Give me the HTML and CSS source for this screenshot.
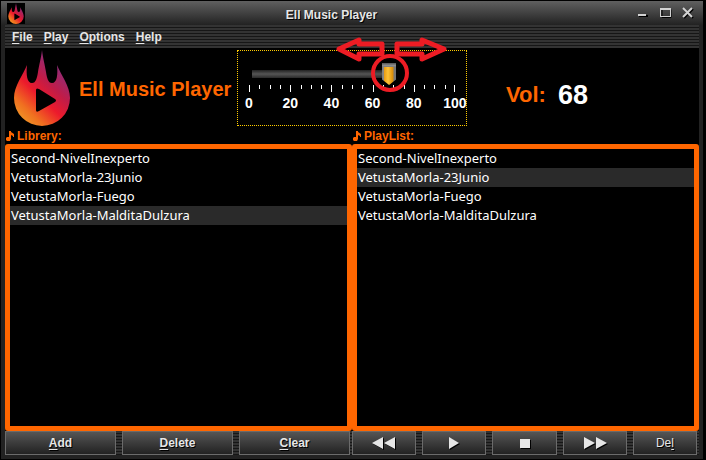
FILE: index.html
```html
<!DOCTYPE html>
<html lang="en">
<head>
<meta charset="utf-8">
<title>Ell Music Player</title>
<link rel="stylesheet" href="styles.css">
</head>
<body>
<svg class="defs" width="0" height="0" aria-hidden="true">
  <defs>
    <linearGradient id="fire" x1="0.15" y1="1" x2="0.75" y2="0.15">
      <stop offset="0" stop-color="#f0a028"/>
      <stop offset="0.22" stop-color="#f07020"/>
      <stop offset="0.48" stop-color="#ec1a2c"/>
      <stop offset="0.7" stop-color="#c01c48"/>
      <stop offset="1" stop-color="#8c2d7c"/>
    </linearGradient>
    <symbol id="flame" viewBox="0 0 56 76">
      <path fill="url(#fire)" fill-rule="evenodd" d="M28 0 C29 9 31 15 32 22 C33 28 34 33 38 33 C43 33 44 25 43 15 C47 25 56 36 56 48 A28 28 0 0 1 0 48 C0 36 9 25 13 15 C12 25 13 33 18 33 C22 33 23 28 24 22 C25 15 27 9 28 0 Z M22 40 V60 Q22 63 25 61 L41 52 Q43 50.500 41 49 L25 39 Q22 37.500 22 40 Z"/>
    </symbol>
    <symbol id="note" viewBox="0 0 8 10">
      <path d="M3 0h2v1l3 2v3h-1v-1l-2-1v4l-1 2h-3l-1-1v-2l1-1h2z"/>
    </symbol>
  </defs>
</svg>
<div class="window">
  <header class="titlebar">
    <svg class="app-icon" viewBox="0 0 18 21" aria-hidden="true"><rect width="18" height="21"/><use href="#flame" x="1" y="0" width="16" height="21"/></svg>
    <h1 class="title">Ell Music Player</h1>
    <div class="window-controls">
      <button type="button" aria-label="Minimize"><svg width="12" height="12"><path d="M1 8h9v2h-9z" fill="#000"/><path d="M0 7h8v2h-8z" fill="#d2d2d2"/></svg></button>
      <button type="button" aria-label="Maximize"><svg width="12" height="12"><path d="M2 2.500h9v8h-9z" fill="none" stroke="#000" stroke-width="1"/><path d="M0 1h11v2h-11zM0 1h1v9h-1zM10 1h1v9h-1zM0 9h11v1h-11z" fill="#d2d2d2"/></svg></button>
      <button type="button" aria-label="Close"><svg width="12" height="12"><path d="M2 2l9 9M11 2l-9 9" stroke="#000" stroke-width="2"/><path d="M1 1l9 9M10 1l-9 9" stroke="#d2d2d2" stroke-width="2"/></svg></button>
    </div>
  </header>
  <div class="frame">
    <nav class="menubar">
      <button type="button"><u>F</u>ile</button>
      <button type="button"><u>P</u>lay</button>
      <button type="button"><u>O</u>ptions</button>
      <button type="button"><u>H</u>elp</button>
    </nav>
    <section class="banner">
      <svg class="logo" aria-hidden="true"><use href="#flame"/></svg>
      <h2 class="brand">Ell Music Player</h2>
      <div class="volume">
        <input type="range" min="0" max="100" value="68" aria-label="Volume">
        <svg class="ticks" viewBox="0 0 206 8" aria-hidden="true">
          <path stroke="#fff" d="M.5 0v7M41.500 0v7M82.500 0v7M124.500 0v7M165.500 0v7M205.500 0v7M10.500 0v4M21.500 0v4M31.500 0v4M52.500 0v4M62.500 0v4M72.500 0v4M93.500 0v4M103.500 0v4M113.500 0v4M134.500 0v4M144.500 0v4M155.500 0v4M175.500 0v4M185.500 0v4M196.500 0v4"/>
        </svg>
        <div class="scale"><span>0</span><span>20</span><span>40</span><span>60</span><span>80</span><span>100</span></div>
        <svg class="drag-hint" viewBox="0 0 112 56" aria-hidden="true">
          <g fill="none" stroke="#ed1c24" stroke-width="5" stroke-linejoin="round">
            <path d="M3 13 L23 4 V8 H46 V18 H23 V23 Z"/>
            <path d="M108 13 L86 4 V8 H61 V18 H86 V23 Z"/>
            <circle cx="54" cy="37" r="17" stroke-width="4"/>
          </g>
        </svg>
      </div>
      <p class="level"><span>Vol:</span><output>68</output></p>
    </section>
    <main class="lists">
      <section class="panel">
        <h3><svg class="note" aria-hidden="true"><use href="#note"/></svg>Librery:</h3>
        <ul>
          <li>Second-NivelInexperto</li>
          <li>VetustaMorla-23Junio</li>
          <li>VetustaMorla-Fuego</li>
          <li class="selected">VetustaMorla-MalditaDulzura</li>
        </ul>
        <div class="actions">
          <button type="button"><span><u>A</u>dd</span></button>
          <button type="button"><span><u>D</u>elete</span></button>
          <button type="button"><span><u>C</u>lear</span></button>
        </div>
      </section>
      <section class="panel">
        <h3><svg class="note" aria-hidden="true"><use href="#note"/></svg>PlayList:</h3>
        <ul>
          <li>Second-NivelInexperto</li>
          <li class="selected">VetustaMorla-23Junio</li>
          <li>VetustaMorla-Fuego</li>
          <li>VetustaMorla-MalditaDulzura</li>
        </ul>
        <div class="actions">
          <button type="button" aria-label="Previous"><svg width="24" height="12"><path d="M11 0v12L0 6zM23 0v12L12 6z"/></svg></button>
          <button type="button" aria-label="Play"><svg width="10" height="12"><path d="M0 0v12L10 6z"/></svg></button>
          <button type="button" aria-label="Stop"><svg width="10" height="12"><path d="M0 2h10v9H0z"/></svg></button>
          <button type="button" aria-label="Next"><svg width="24" height="12"><path d="M1 0v12L12 6zM13 0v12L24 6z"/></svg></button>
          <button type="button" class="plain"><span>De<u>l</u></span></button>
        </div>
      </section>
    </main>
  </div>
</div>
</body>
</html>
```
FILE: styles.css
```css
* { box-sizing: border-box; }
body {
  margin: 0;
  background: #000;
  color: #e6e6e6;
  font: bold 12px/16px "Liberation Sans", Arial, sans-serif;
}
h1, h2, h3, p, ul { margin: 0; padding: 0; font: inherit; }
ul { list-style: none; }
button { margin: 0; padding: 0; border: 0; background: none; color: inherit; font: inherit; }
svg { display: block; }
u { text-underline-offset: 2px; }
.defs { position: absolute; }
.window {
  display: flex;
  flex-direction: column;
  min-height: 100vh;
  padding: 1px 3px 1px 1px;
}
.titlebar {
  display: flex;
  align-items: center;
  height: 24px;
  padding: 0 9px 0 6px;
  background: linear-gradient(#606060, #222);
  text-shadow: 1px 1px #000;
}
.title { flex: 1; padding-top: 3px; text-align: center; }
.app-icon { width: 18px; height: 21px; }
.window-controls { display: flex; gap: 10px; }
.frame {
  flex: 1;
  display: flex;
  flex-direction: column;
  padding: 0 4px 4px;
  background: #222;
}
.menubar, .actions {
  background: repeating-linear-gradient(#333 0 2px, #161616 2px 3px);
}
.menubar {
  display: flex;
  gap: 11px;
  height: 23px;
  padding: 0 7px;
  text-shadow: 1px 1px #000;
}
.banner {
  display: flex;
  height: 80px;
  background: #000;
}
.logo { width: 56px; height: 76px; margin: 2px 9px 0; }
.brand { width: 158px; color: #f60; font-size: 20px; line-height: 82px; white-space: nowrap; }
.volume {
  position: relative;
  width: 230px;
  height: 76px;
  margin-top: 2px;
  padding: 12px 4px 0;
  border: 1px dotted #fc0;
}
.volume input {
  appearance: none;
  display: block;
  width: 220px;
  height: 22px;
  margin: 0;
  background: linear-gradient(#222, #555 50%, #2a2a2a) 10px 7px / 140px 8px no-repeat;
}
.volume input::-webkit-slider-thumb {
  appearance: none;
  width: 14px;
  height: 22px;
  clip-path: polygon(0 0, 100% 0, 100% 75%, 50% 100%, 0 75%);
  background:
    linear-gradient(#555, #999 3px, #666 4px, transparent 4px),
    linear-gradient(90deg, #888 2px, #e89a10 2px, #ffc338 6px, #d88c08 11px, #777 12px);
}
.ticks { width: 206px; height: 8px; margin-left: 7px; }
.scale {
  display: flex;
  justify-content: space-between;
  width: 206px;
  margin: 2px 7px;
  color: #fff;
  font-size: 14px;
}
.scale span { display: flex; justify-content: center; width: 0; }
.drag-hint { position: absolute; top: -15px; right: 18px; width: 112px; height: 56px; }
.level {
  display: flex;
  gap: 12px;
  align-items: center;
  padding: 14px 0 0 39px;
  color: #f60;
  font-size: 22px;
}
.level output { color: #fff; font-size: 27px; }
.lists { flex: 1; display: flex; background: #000; }
.panel { flex: 1; display: flex; flex-direction: column; min-width: 0; }
.panel h3 { display: flex; gap: 3px; align-items: center; padding-left: 1px; color: #f60; }
.note { width: 8px; height: 10px; fill: #f60; }
.panel ul {
  flex: 1;
  border: 5px solid #f60;
  border-radius: 3px;
  color: #fff;
  font: 13px/19px "Noto Sans", sans-serif;
}
.panel li { padding-left: 1px; }
.selected { background: #2a2a2a; }
.actions { display: flex; gap: 6px; padding-right: 2px; }
.actions button {
  flex: 1;
  display: flex;
  align-items: center;
  justify-content: center;
  height: 24px;
  border: 1px solid #6b6b6b;
  background: linear-gradient(#555, #222);
  text-shadow: 1px 1px #000;
}
.actions .plain { font-weight: normal; }
.actions svg { fill: #e6e6e6; filter: drop-shadow(1px 1px #000); }
```
